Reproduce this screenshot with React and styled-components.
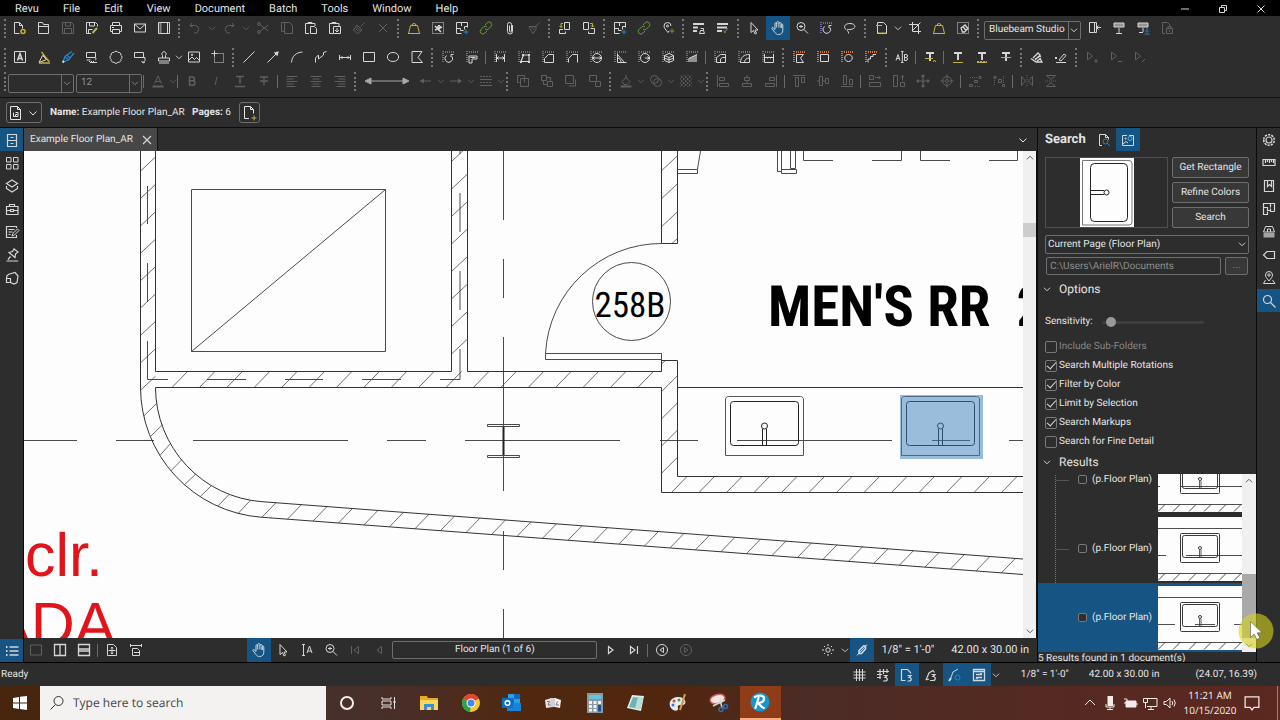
import React, { useState } from 'react';
import styled, { createGlobalStyle } from 'styled-components';

const YEL = '#c2b03c';
const GRN = '#6b9a35';
const BLU = '#2585c9';
const PUR = '#7561b0';
const ORG = '#e0702c';

const GlobalStyle = createGlobalStyle`
    * {
        box-sizing: border-box;
    }

    body {
        margin: 0;
        background: #2d2d2d;
        color: #e4e4e4;
        font-family: Roboto, "Liberation Sans", sans-serif;
        font-size: 10px;
        line-height: 14px;
        text-rendering: geometricPrecision;
        overflow: hidden;
    }

    button, input, select {
        font: inherit;
        color: inherit;
        margin: 0;
        text-rendering: inherit;
    }
`;

/* ---------- icons ---------- */

const ring = (cx, cy, r) =>
    `M${cx - r} ${cy}a${r} ${r} 0 1 0 ${2 * r} 0a${r} ${r} 0 1 0 ${-2 * r} 0`;

const HAND = 'M5 9.5L3.2 7.8c-.9-.8-1.7.2-1.2.9L5 12.6c.8 1.2 1.8 1.9 3.6 1.9 2.600 0 4.200-1.600 4.200-4.200V5c0-1.200-1.700-1.200-1.700 0V8M5 9.500V3.600c0-1.200 1.700-1.200 1.700 0V7.500M6.700 4V2.500c0-1.200 2.200-1.200 2.200 0V7.500M8.900 3.500c0-1.200 2.200-1.200 2.200 0V8';
const SMALL_CHAIN = 'M7 5l2.200-2.200a2.500 2.500 0 0 1 3.800 3.600L10.500 9a2.500 2.500 0 0 1-3.500 0M9 11l-2.200 2.200a2.500 2.500 0 0 1-3.800-3.600L5.500 7a2.500 2.500 0 0 1 3.500 0';
const PLAN = 'M13.500 7.500V2.500h-11v11h5M2.500 8.500h4M7.500 2.500v3.500M13.500 6.500h-3v3M6.500 8.500v2h3';
const dots = { dash: '1 1' };

const icons = {
    newDoc: [['M7.500 13.500h-5v-11h5l3 3v3M7.500 2.500v3h3'], [ring(11, 11.500, 2), { c: YEL, w: 1.600 }]],
    open: [['M2.500 13.500v-11h4l1 2h5v9zM2.500 6.500h10']],
    save: [['M2.500 2.500h9l2 2v9h-11zM5.500 2.500v3.500h5v-3.500M4.500 13.500v-5h7v5']],
    saveAs: [['M7 13.500h-4.500v-11h9l2 2v2M5.500 2.500v3.500h5v-3.500M4.500 13.500v-4h4'], ['M8.500 13l4.500-5', { c: YEL, w: 2 }]],
    print: [['M4.500 5.500v-3h7v3M4.500 11.500h-2v-6h11v6h-2M4.500 9.500h7v4h-7zM4 7.500h2']],
    mail: [['M2.500 4h11v8h-11zM2.500 4l5.500 5 5.500-5']],
    binder: [['M2.500 2.500h11v11h-11zM11.500 2.500v11'], ['M4.500 2.500v11', { dash: '1 1', w: 2 }]],
    undo: [['M5 3L3 5.500 5.500 7.500M3 5.500h5.500a3.800 3.800 0 0 1 0 7.500H7']],
    redo: [['M11 3l2 2.500L10.500 7.500M13 5.500H7.500a3.800 3.800 0 0 0 0 7.500H9']],
    cut: [['M5.300 5l8 6M5.300 11l8-6'], [ring(4, 4, 1.500) + ring(4, 12, 1.500)]],
    copy: [['M5.500 2.500h5l3 3v8h-8zM5.500 11.500h-3v-9h3']],
    paste: [['M6 13.500H2.500v-10H12V6M5 3.500v-1h4v1M7.500 6.500h4l2 2v5h-6z']],
    pasteIn: [['M6 13.500H2.500v-10H12V6M5 3.500v-1h4v1M6.500 6.500h7v7h-7zM10 8v4M8 10l2 2 2-2']],
    brush: [['M13.500 2.500l-4 4M6 5l5 5-1.500 1L5 6.500zM5 6.500L2.500 10l4 4 3-3M5 9l2 2']],
    cross: [['M4 4l8 8M12 4l-8 8']],
    weight: [['M4.500 5.500h7l2 8h-11zM6 5.500a2 2 0 1 1 4 0M2 13.500h12', { c: YEL }]],
    maskCut: [['M2.500 2.500h11v11h-11z', dots], ['M5 6l6 6M5 10l7-3M9 5v6', { w: 1.600 }], [ring(9, 7, 1.500)]],
    planAdd: [[PLAN], ['M12 9.500v5M9.500 12h5', { c: BLU }]],
    chain: [[SMALL_CHAIN, { c: GRN }]],
    clip: [['M10.500 5v6.500a2.500 2.500 0 0 1-5 0V4.500a2 2 0 0 1 4 0v6.500a1 1 0 0 1-2 0V5.500']],
    broom: [['M13.500 2.500l-4.500 5M3 6.500h7v3L7 13.500 3 7zM5.500 7l3 3']],
    pageBack: [['M7.500 2.500h5v7h-5zM6 9.500h-3.500v4h6v-2'], ['M6 3.500H4v4M2.500 6L4 7.500 5.500 6', { c: YEL }]],
    pageFwd: [['M2.500 2.500h5v7h-5zM7.500 11.500v2h6v-5h-4'], ['M9 3.500h2.500V7M10 5.500L11.500 7 13 5.500', { c: YEL }]],
    pinAdd: [['M8 12.500C5 9 4 7.500 4 6a3.500 3.500 0 0 1 7 0M8 12.500l1-1.500'], [ring(7.500, 6, 1)], ['M12 8.500v5M9.500 11h5', { c: GRN }]],
    listUser: [['M2 4h11M2 7.500h5M2 11h4', { w: 2 }], ['M8.500 13.500l1-3h3l1 3zM9.500 8.500h3v2']],
    listEdit: [['M2 4h11M2 7.500h10M2 11h5', { w: 2 }], ['M9 13l4-5M8.500 10.500l2 2.500', { c: GRN }]],
    arrow: [['M5 2.500v10l2.500-2 1.500 3.500 1.500-.7-1.500-3.300h3z']],
    hand: [[HAND]],
    zoom: [[ring(7, 6.500, 4)], ['M10 9.500l4 4M5 6.500h4M7 5v3']],
    lasso: [['M4 9.500C1.500 8 2 3.500 8 3.500s7 5.500 0 6c-2 0-3-.5-3 .5s2 1 1.500 3.500']],
    rotA: [['M6.500 6.500A3.800 3.800 0 1 0 12 7.500M13.500 5.500H11V8']],
    flag: [['M5 7h8v3H8v4H5zM6.500 8.500h5']],
    len: [['M4.500 5v8M12.500 5v8M5 9h7M6.500 7.500L5 9l1.500 1.500M10.500 7.500L12 9l-1.500 1.500']],
    poly: [['M5 12.500h8V6H7.500z', { w: 1.200 }], ['M4 12h2v2H4zM12 12h2v2h-2zM12 5h2v2h-2zM6 5h2v2H6z', { f: 1 }]],
    area: [['M4.500 13.500V9.500l4-4h5v8z']],
    poly2: [['M4.500 13.500V9.500l4-4h5v8']],
    diam: [[ring(9, 9, 4.500)], ['M5 9h8M6.500 7.500L5 9l1.500 1.500M11.500 7.500L13 9l-1.500 1.500']],
    angle: [['M5.500 4.500v9h9M5.500 5.500l7 8M5.500 9c2 0 3.500 2 3.500 4.500']],
    radius: [[ring(9, 9, 4.500)], ['M9 9h4.500M11.500 7.500L13 9l-1.500 1.500']],
    cube: [['M9 4.500l4.500 2v5L9 13.500l-4.500-2v-5zM4.500 6.500L9 8.500l4.500-2M9 8.500v5M4.500 9L9 11l4.500-2']],
    slope: [['M4 13V9.500l9-4V13z', { f: 1, o: 0.6 }], ['M5 9.500l8-4']],
    cutout: [['M4.500 13.500V8.500l4-3h5v8zM8.500 13v-3l2-1.500h3']],
    arcCut: [['M4.500 13.500C4.500 8 8 5.500 13.500 5.500v8zM8.500 13.500c0-3 2-4.500 5-4.500']],
    dyn: [['M4.500 5v8.500h9V5M5 8.500h8M6 8l1.500 1L9 8l1.500 1L12 8']],
    rotPoly: [['M5.500 5.500h7L9.500 9l3 4.500h-7z']],
    rotRect: [['M5.500 5.500h8v7h-8z']],
    rotEll: [['M9.500 5.500c5 0 5 7 0 7s-5-7 0-7z']],
    rotLine: [['M5 13.500V10h2.500V7.500H10V5.500h3']],
    pageMark: [['M4.500 13.500v-11h6l3 3v8z'], ['M3 5.500h6M5 13h8', { c: YEL }]],
    crop: [['M5.500 2v9.500H14M2 4.500h9.500V14M13.500 2.500l-8 8']],
    maskErase: [['M2.500 2.500h11v11h-11z', dots], ['M6 8l4-3 3 3.500-3.500 3.500-2 0zM8 6.500l3 4', { w: 1.300 }]],
    textBox: [['M2.500 2.500h11v11h-11z'], ['M5.500 11.500L8 4.500l2.500 7M6.500 9.500h3', { w: 1.500 }]],
    highlight: [['M3 13.500l3.500-7 4 4zM7 6l4 4.500 2.500 1.500'], ['M5.500 3L13 12.500M3 14h11', { c: YEL, w: 1.300 }]],
    pen: [['M3 13l2-5.500 7-5M3 13l5.500-2L14 4M5 7.500L8.500 11M7 6l3 3', { c: BLU, w: 1.300 }], ['M2.500 13.500l1.500-1.500', { w: 2 }]],
    callout: [['M2.500 3.500h9v5h-9zM6 8.500h4c2 0 3 2 1 2.500M2.500 11h4M6 13.500h7'], ['M5 12.500h6', dots]],
    cloud: [['M6 3.500a2.200 2.200 0 0 1 4 0 2.200 2.200 0 0 1 2.800 2.800 2.200 2.200 0 0 1 0 4 2.200 2.200 0 0 1-2.800 2.800 2.200 2.200 0 0 1-4 0 2.200 2.200 0 0 1-2.800-2.800 2.200 2.200 0 0 1 0-4A2.200 2.200 0 0 1 6 3.500z']],
    note: [['M2.500 3.500h9v5h-9zM9 8.500h4v3l-2 2M9.500 12l1.500 2 2-1']],
    stamp: [['M6.500 9V6.500a2.200 2.200 0 1 1 3 0V9M2.500 9h11v3h-11zM3 14h10']],
    image: [['M2.500 3h11v10h-11zM3 11l3-3 2.500 2.500 2-2 3 3'], [ring(6, 5.800, 0.8)]],
    snapshot: [['M4.500 4.500h9v9h-9z', dots], ['M4.500 1.500v6M1.500 4.500h6', { c: '#cfcfcf' }]],
    line: [['M2.500 13.500l11-11']],
    arrowLine: [['M2.500 13.500l9-9'], ['M13.800 2.200l-1.300 5-3.700-3.700z', { f: 1 }]],
    arc: [['M2.500 13.500C3 7 7 3.500 13.500 3']],
    polyline: [['M2.500 13.500V9l3-3v4l5-4V3.500l3-1']],
    dim: [['M2.500 6v5M13.500 6v5M3 8.500h10'], ['M3 8.500l2.500-1.500v3zM13 8.500l-2.500-1.500v3z', { f: 1 }]],
    rect: [['M2.500 3.500h11v9h-11z']],
    ellipse: [['M8 3.500c7.500 0 7.500 9 0 9s-7.500-9 0-9z']],
    polygon: [['M3 2.500h10l-4 6 4.500 5H3z']],
    ab: [['M2 11.500l2-6 2 6M3 9.500h2M10.500 5.500v6h1.500a1.500 1.500 0 0 0 0-3h-1.500h1.500a1.500 1.500 0 0 0 0-3zM8.300 3v10M7 2.500h2.500M7 13.500h2.500']],
    tMark: [['M4 4h8M8 4v8', { w: 2 }], ['M3 9.500h8M11 13l1.500-2 1.500 2', { c: YEL }]],
    tUnder: [['M4 4h8M8 4v7', { w: 2 }], ['M3 13.500h10', { c: YEL }]],
    tSquig: [['M4 4h8M8 4v7', { w: 2 }], ['M3 12.500h10', { c: YEL, dash: '2 1' }], ['M3 13.500h10', { c: YEL }]],
    tStrike: [['M4 4h8M8 4v8', { w: 2 }], ['M3 8.500h10', { c: YEL }]],
    sign: [['M2 9.500l5 3.500h6l-2-3.500M4 9l5-5 2 2-5 5M6 10l6-3M8 12l4-3', { w: 1.300 }]],
    initials: [['M2 8l2 2M4 8l-2 2M3 13.500h10M6 11l5-6 2 1.500L8 12z']],
    sel1: [['M3.500 3v8l5-4z'], ['M10 12h4M12 10v4']],
    sel2: [['M3.500 3v8l5-4z'], ['M10 12.500h4']],
    sel3: [['M3.500 3v8l5-4z'], ['M10 13l3-3']],
    fontColor: [['M4.500 10.500L8 3l3.500 7.500M5.500 8.500h5'], ['M2.500 13.500h11', { w: 2 }]],
    bold: [['M5.500 4v8h3.200a2 2 0 0 0 0-4.200H5.500h3a1.900 1.900 0 0 0 0-3.800z', { w: 1.500 }]],
    italic: [['M9 4L7 12']],
    under: [['M4 3.500h8M8 3.500v7M3 13.500h10', { w: 1.400 }]],
    strike: [['M4 4h8M8 4v8.500M4 8h8', { w: 1.300 }]],
    alignL: [['M2.500 3.500h11M2.500 6h7M2.500 8.500h11M2.500 11h7M2.500 13.500h9']],
    alignC: [['M2.500 3.500h11M4.500 6h7M2.500 8.500h11M4.500 11h7M3.500 13.500h9']],
    alignR: [['M2.500 3.500h11M6.500 6h7M2.500 8.500h11M6.500 11h7M4.500 13.500h9']],
    startL: [['M2 8h11'], ['M2 8l4-2.500v5z', { f: 1 }]],
    endR: [['M2 8h11'], ['M14 8l-4-2.500v5z', { f: 1 }]],
    lines: [['M2 3.500h12M2 9.500h12', { dash: '2 1' }], ['M2 6.500h12M2 12.500h12']],
    order1: [['M2.500 2.500h7v7M2.500 2.500v7h2M5.500 5.500h8v8h-8z']],
    order2: [['M2.500 2.500h5v5h-5zM8.500 8.500h5v5h-5zM8 4.500h3.500v4M4.500 8v3.500h4']],
    order3: [['M2.500 2.500h8v8h-8zM12.500 6.500v6.500h-6.500']],
    order4: [['M2.500 2.500h7v6h-7zM9.500 8.500h4v5h-5v-5']],
    fill: [['M4 8.500l4-4 4 4-3 3H6zM8 2v4'], ['M2.500 13.500h11', { w: 2 }]],
    opac: [[ring(6.500, 6.500, 4) + ring(9.500, 9.500, 4)]],
    hatch: [['M2.500 5.500l3-3M2.500 9.500l7-7M2.500 13.500l11-11M6.500 13.500l7-7M10.500 13.500l3-3M2.500 10.500l3 3M2.500 6.500l7 7M2.500 2.500l11 11M6.500 2.500l7 7M10.500 2.500l3 3', { dash: '2 1' }]],
    alL: [['M2.500 2v12M4.500 4.500h5v3h-5zM4.500 10.500h9v3h-9z']],
    alC: [['M8 2v2M8 7.500v3M5.500 4.500h5v3h-5zM3.500 10.500h9v3h-9z']],
    alR: [['M13.500 2v12M6.500 4.500h5v3h-5zM2.500 10.500h9v3h-9z']],
    alT: [['M2 2.500h12M4.500 4.500h3v9h-3zM10.500 4.500h3v5h-3z']],
    alM: [['M2 8h2M7.500 8h3M4.500 3.500h3v9h-3zM10.500 5.500h3v5h-3z']],
    alB: [['M2 13.500h12M4.500 2.500h3v9h-3zM10.500 6.500h3v5h-3z']],
    sameW: [['M2.500 2.500h4v4h-4zM2.500 9.500h11v4h-11zM8 4.500h5.500M11.500 3l2 1.500-2 1.500']],
    sameH: [['M2.500 2.500h4v11h-4zM9.500 9.500h4v4h-4zM11.500 2.500v5M10 4.500l1.500-2 1.500 2']],
    center: [['M8 2v12M2 8h12M6.500 3.500L8 2l1.500 1.500M6.500 12.500L8 14l1.500-1.500M3.500 6.500L2 8l1.500 1.500M12.500 6.500L14 8l-1.500 1.500', { w: 1.200 }]],
    target: [[ring(8, 8, 4.500) + ring(8, 8, 1.500)], ['M8 1.500v4M8 10.500v4M1.500 8h4M10.500 8h4']],
    distH: [['M2.500 11.500h3v2h-3zM7.500 7.500h3v2h-3zM12 3.500h2v2h-2z'], ['M3 4.500h8M8 13.500h6', dots]],
    distV: [['M3 3.500h2v2H3zM7.500 6.500h3v3h-3zM11.500 11.500h2v2h-2z'], ['M3.500 7v6M12.500 3v7', dots]],
    flipH: [['M2.500 3.500v9l4-4.500zM13.500 3.500v9l-4-4.500z'], ['M8 2v12', dots]],
    flipV: [['M3.500 2.500h9L8 6.500zM3.500 13.500h9L8 9.500z'], ['M2 8h12', dots]],
    exitRoom: [['M2.500 2.500h5v10h-5zM7.500 2.500h2v10h-2M14 7.500H9.500M11.500 5.500l-2 2 2 2']],
    project: [['M3 3h10v4H3z', { f: 1, o: 0.6 }], ['M8 8v5M5 13.500h6M3 3h10v4H3z']],
    projectIn: [['M3 3h10v4H3z', { f: 1, o: 0.6 }], ['M8 8v4M4 12.500h4M3 3h10v4H3z'], ['M12 8v4M10 10.500l2 2 2-2M9.500 14h5', { c: BLU }]],
    docLock: [['M6 13.500H3.500v-11h5l3 3M7.500 8.500h6v5h-6zM9 8V6.500h3V8M10.500 10v2']],
    thumbs: [['M2.500 2.500h4.500v4.500H2.500zM9.500 2.500H14v4.500H9.500zM2.500 9.500h4.500V14H2.500zM9.500 9.500H14V14H9.500z']],
    cabinet: [['M3.500 2.500h9v12h-9zM3.500 8.500h9M6.500 5.500h3M6.500 11.500h3', { w: 1.200 }]],
    layers: [['M8 2L2.500 5.500 8 9l5.500-3.500zM2.500 8v2.500L8 14l5.500-3.500V8', { w: 1.200 }]],
    toolbox: [['M2.500 5.500h11.500v8H2.500zM2.500 9.500h4M9.500 9.500H14M6.500 8.500h3v2h-3zM5.500 5.500v-2h5v2', { w: 1.200 }]],
    formEdit: [['M12.500 4V2.500h-10v11h10V11M4.500 5.500h6M4.500 8h4M4.500 10.500h2', { w: 1.200 }], ['M8 12l.8-2.500L13.500 5l1.500 1.500-4.500 4.500z']],
    sigs: [['M2.500 14h11.500M4 12.500l2.500-3M5 5.500l6 5 .5-3.500 2.500-2-4-3-1.500 2.500z', { w: 1.200 }]],
    tag3d: [['M5.500 4L11 2.500l3 3.500-1 6.500-3 1.500-3.500-1.500M2.500 8.500h4v4h-4zM2.500 8.500l.5-3 2.500-1.500', { w: 1.200 }]],
    gear: [[ring(8, 8, 3), { w: 1.200 }], [ring(8, 8, 5.300), { w: 1.600, dash: '2.200 1.100' }]],
    ruler: [['M2 4.500h12v6H2zM4.500 5v3M6.500 5v2M8.500 5v3M10.500 5v2M12.500 5v3', { w: 1.200 }]],
    bookmark: [['M3.500 2.500h9v11h-9zM6.500 2.500v6l2-2 2 2v-6', { w: 1.200 }]],
    spaces: [['M13.500 10.500V2.500h-11v11h4v-3M2.500 6.500h4v3h3M9.500 2.500v4M13.500 10.500h-4v-3', { w: 1.200 }]],
    sets: [['M4.500 2.500h7l2 5.500h-11zM6.500 8V5h3v3'], ['M2.500 9h11v4.500h-11z', { f: 1, o: 0.7 }]],
    label: [['M6 4.500h7.500v7H6L2.500 8z', { w: 1.200 }]],
    mapPin: [['M8 11C5.500 8 4.500 6.500 4.500 5a3.500 3.500 0 0 1 7 0C11.500 6.500 10.500 8 8 11zM4.500 10L2.500 13.500H14L11.500 10'], [ring(8, 5, 1.200)]],
    search: [[ring(6.500, 6.500, 4), { w: 1.200 }], ['M9.500 9.500l5 5', { w: 1.200 }]],
    docSearch: [['M6 13.500H3.500v-11h6l3 3v2M9.500 2.500v3h3'], [ring(9.500, 9.500, 2.500), { c: BLU }], ['M11.500 11.500l2.500 2.500', { c: BLU }]],
    visSearch: [['M2.500 13.500v-10H7M9 3.500h4.500v10h-11M3 12l3-2.500 2 1.500'], [ring(10, 6.500, 2), { c: '#5fb0e8' }], [ring(5.500, 6.500, 0.6)]],
    bullets: [['M5.500 4h9M5.500 8h9M5.500 12h9', { w: 1.500 }], ['M2 4h1.500M2 8h1.500M2 12h1.500', { w: 2 }]],
    single: [['M2.500 3h11v10h-11z']],
    splitV: [['M2.500 2.500h11v11h-11zM8 3v10', { w: 1.300 }]],
    splitH: [['M2.500 2.500h11v11h-11zM2.500 7h11M2.500 9h11', { w: 1.300 }]],
    fitPage: [['M3.500 2.500h6l3 3v8h-9zM8 5v7M4.500 8.500h7M7 6.500l1-1.500 1 1.500M7 10.500l1 1.500 1-1.500']],
    fitWidth: [['M2.500 2v3M13.500 2v3M3 3.500h10M4.500 13.500v-7h5l2 2v5zM6 10.500h6']],
    selText: [['M4.500 3v10M3 2.500h3M3 13.500h3M8 11l2.500-7 2.500 7M9 9h3']],
    first: [['M4.500 4v8M11.500 4.500v7L7 8z']],
    prev: [['M10.500 4.500v7L6 8z']],
    next: [['M6.500 4.500v7L11 8z', { w: 1.200 }]],
    last: [['M11.500 4v8M4.500 4.500v7L9 8z', { w: 1.200 }]],
    backView: [[ring(8, 8, 5.500)], ['M9.500 5.500v5L6 8z']],
    fwdView: [[ring(8, 8, 5.500)], ['M6.500 5.500v5L10 8z']],
    sun: [[ring(8, 8, 2.200)], ['M8 2v2M8 12v2M2 8h2M12 8h2M4 4l1 1M11 11l1 1M12 4l-1 1M4 12l1-1']],
    penSlash: [['M3 13.500l10-11'], ['M5 11.500V8.500l4.500-4.500h2v3L7.500 11.500z', { w: 1.600 }]],
    grid: [['M5.500 2v12M8.500 2v12M11.500 2v12M2.500 5h12M2.500 8h12M2.500 11h12']],
    snapGrid: [['M5 2v10M8.500 2v5M12 2v4M2 4.500h12M2 7.500h5M2 10.500h4M8.500 8.500h3.500l-2 2c3 0 3 3.500 0 3.500H8', { w: 1.200 }]],
    snapDoc: [['M6.500 13.500h-4v-11h6l3 3v1M8.500 8.500H12l-2 2c3 0 3 3.500 0 3.500H8.500', { w: 1.200 }]],
    snapMark: [['M3 13l3-7 4-2.500 1.500 2M3 13l3-1M8.500 7.500H12l-2 2c3 0 3 4 0 4H7', { w: 1.200 }]],
    reuse: [['M3 13l3-8 5-3'], ['M2 14l2-3', { w: 2 }], [ring(10.500, 10.500, 2.500), { c: BLU }]],
    syncView: [['M2.500 2.500h11v11h-11zM2.500 4.500h11M5 7.500h6M9.500 6l1.500 1.500M11 10.500H5M6.500 12L5 10.500', { w: 1.300 }]],
    pageAdd: [['M8 13.500H3.500v-12h6l3 3v4M9.500 1.500v3h3'], ['M13 10.500v5M10.500 13h5', { c: YEL }]],
    pageKey: [['M2.500 14.500v-13h7l3 3v10zM9.500 1.500v3h3M5.500 7.500v4h2M7.500 7.500h2.500v4h-2.500v-2h2']],
    down: [['M4.500 6.500L8 10l3.500-3.500']],
    up: [['M4.500 9.500L8 6l3.500 3.500']],
    close: [['M4 4l8 8M12 4l-8 8', { w: 1.200 }]],
};

const Svg = styled.svg`
    display: block;
    flex: none;
    width: ${(p) => p.$size || 16}px;
    height: ${(p) => p.$size || 16}px;
    fill: none;
    stroke: currentColor;
`;

const Icon = ({ name, size, back }) => (
    <Svg $size={size} viewBox="0 0 16 16" aria-hidden="true">
        {back && <path d="M3 2v12M5 3h10" stroke={back} strokeWidth="2" strokeDasharray="1 1" />}
        {icons[name].map(([d, o = {}], i) => (
            <path
                key={i}
                d={d}
                stroke={o.f ? 'none' : o.c}
                fill={o.f ? 'currentColor' : undefined}
                opacity={o.o}
                strokeWidth={o.w}
                strokeDasharray={o.dash}
            />
        ))}
    </Svg>
);

/* ---------- shared bits ---------- */

const IconButton = styled.button`
    display: flex;
    align-items: center;
    justify-content: center;
    flex: none;
    width: ${(p) => p.$w || 24}px;
    height: ${(p) => p.$h || 24}px;
    padding: 0;
    border: 0;
    background: ${(p) => (p.$on ? '#155483' : 'transparent')};
    color: ${(p) => (p.$dim ? '#606060' : '#d6d6d6')};
`;

const Grip = styled.span`
    flex: none;
    width: 7px;
    height: 19px;
    border-right: 2px dotted #777;
    margin-right: ${(p) => (p.$lead ? 2 : 3)}px;
    margin-left: ${(p) => (p.$lead ? -1 : -3)}px;
`;

const Sep = styled.span`
    flex: none;
    width: 1px;
    height: 13px;
    margin: 0 2px 0 1px;
    background: #6a6a6a;
`;

const ToolRow = styled.div`
    display: flex;
    align-items: center;
    height: 24px;
    margin-bottom: ${(p) => p.$gap || 0}px;
`;

const Combo = styled.div`
    position: relative;
    display: flex;
    flex: none;
    width: ${(p) => p.$w}px;
    height: 19px;
    margin: ${(p) => p.$m || '4px 2px 0 0'};
    color: ${(p) => (p.$dim ? '#8e8e8e' : '#e4e4e4')};

    select {
        appearance: none;
        width: 100%;
        padding: 0 14px 0 ${(p) => (p.$plain ? 2 : 4)}px;
        border: 1px solid #6e6e6e;
        border-radius: 2px;
        background: #2d2d2d;
        outline: none;
    }

    svg {
        position: absolute;
        right: 0;
        top: 2px;
        pointer-events: none;
    }

    &::after {
        content: '';
        position: absolute;
        right: 12px;
        top: 1px;
        bottom: 1px;
        width: ${(p) => (p.$plain ? 0 : 1)}px;
        background: #6e6e6e;
    }
`;

/* an entry is a name, or [name, options]; menu is the width of the drop-down arrow */
const row1 = [
    ['newDoc', 'open', ['save', { dim: 1 }], 'saveAs', 'print', 'mail', 'binder'],
    [['undo', { dim: 1, menu: 10 }], ['redo', { dim: 1, menu: 10 }], ['cut', { dim: 1 }], ['copy', { dim: 1 }], 'paste', 'pasteIn', ['brush', { dim: 1 }], ['cross', { dim: 1 }]],
    ['weight', 'maskCut', 'planAdd', 'chain', 'clip', ['broom', { dim: 1 }]],
    ['pageBack', 'pageFwd'],
    ['planAdd', 'chain', 'pinAdd'],
    ['listUser', 'listEdit'],
    ['arrow', ['hand', { on: 1 }], 'zoom', ['rotA', { back: PUR }], 'lasso'],
    [['pageMark', { menu: 10 }], 'crop', 'weight', 'maskErase'],
];

const row2 = [
    ['textBox', 'highlight', 'pen', 'callout', 'cloud', 'note', ['stamp', { menu: 6 }], 'image', 'snapshot'],
    ['line', 'arrowLine', 'arc', 'polyline', 'dim', 'rect', 'ellipse', 'polygon'],
    [
        ...['rotA', 'flag', '|', 'len', 'poly', 'area', 'poly2', 'diam', 'angle', 'radius', 'cube', 'slope', '|', 'cutout', 'arcCut', 'dyn']
            .map((n) => (n === '|' ? n : [n, { back: PUR }])),
    ],
    ['rotPoly', 'rotRect', 'rotEll', 'rotLine'].map((n) => [n, { back: ORG }]),
    ['ab', '|', 'tMark', '|', 'tUnder', 'tSquig', 'tStrike'],
    ['sign', 'initials'],
    [['sel1', { dim: 1 }], ['sel2', { dim: 1 }], ['sel3', { dim: 1 }]],
];

const dimmed = (list) => list.map((n) => (n === '|' ? n : [n, { dim: 1 }]));
const dimMenu = (list) => list.map((n) => [n, { dim: 1, menu: 6 }]);

const textTools = ['|', ['fontColor', { dim: 1, menu: 6 }], ...dimmed(['|', 'bold', 'italic', 'under', 'strike', '|', 'alignL', 'alignC', 'alignR'])];

const row3 = [
    dimmed(['order1', 'order2', 'order3', 'order4']),
    dimMenu(['fill', 'opac', 'hatch']),
    dimmed(['alL', 'alC', 'alR', '|', 'alT', 'alM', 'alB', '|', 'sameW', 'sameH', 'center', 'target', '|', 'distH', 'distV', '|', 'flipH', 'flipV']),
];

const Tools = ({ items, h }) =>
    items.map((item, i) => {
        if (item === '|') return <Sep key={i} />;
        const [name, o = {}] = Array.isArray(item) ? item : [item];
        return (
            <React.Fragment key={i}>
                <IconButton $on={o.on} $dim={o.dim} $h={h} aria-label={name}>
                    <Icon name={name} back={o.back} />
                </IconButton>
                {o.menu && (
                    <IconButton $w={o.menu} $h={h} $dim={o.dim} aria-label={`${name} menu`}>
                        <Icon name="down" size={14} />
                    </IconButton>
                )}
            </React.Fragment>
        );
    });

const Groups = ({ groups, lead }) =>
    groups.map((g, i) => (
        <React.Fragment key={i}>
            <Grip $lead={lead && i === 0} />
            <Tools items={g} />
        </React.Fragment>
    ));

/* ---------- frame ---------- */

const Page = styled.div`
    display: flex;
    flex-direction: column;
    height: 100vh;
`;

const MenuBar = styled.nav`
    display: flex;
    align-items: center;
    gap: 24px;
    height: 16px;
    padding: 1px 0 0 15px;
    background: #000;

    button {
        padding: 0;
        border: 0;
        background: none;
        font-size: 11px;
    }
`;

const WindowButtons = styled.div`
    display: flex;
    gap: 22px;
    margin-left: auto;
    padding-right: 11px;
`;

const Toolbars = styled.header`
    padding-bottom: 4px;
    border-bottom: 1px solid #111;
`;

const DoubleArrow = styled.svg`
    flex: none;
    width: 55px;
    height: 12px;
    fill: #a8a8a8;
    stroke: #a8a8a8;
`;

const DocBar = styled.div`
    display: flex;
    align-items: center;
    height: 30px;
    padding-left: 6px;
    border-bottom: 1px solid #0c0c0c;
`;

const DocButton = styled.button`
    display: flex;
    align-items: center;
    justify-content: space-around;
    width: ${(p) => p.$w}px;
    height: 21px;
    padding: 0;
    border: 1px solid #6e6e6e;
    border-radius: 3px;
    background: transparent;
`;

const DocInfo = styled.p`
    margin: 0 8px;
`;

const Main = styled.main`
    display: flex;
    flex: 1;
    min-height: 0;
    border-bottom: 1px solid #000;
`;

const Rail = styled.div`
    display: flex;
    flex-direction: column;
    flex: none;
    width: ${(p) => (p.$left ? 24 : 23)}px;
    border-right: ${(p) => (p.$left ? '1px solid #0c0c0c' : '0')};

    button {
        width: 100%;
    }

    button:nth-child(8):last-child {
        margin-top: ${(p) => (p.$left ? 'auto' : '0')};
    }
`;

const Center = styled.section`
    display: flex;
    flex-direction: column;
    flex: 1;
    min-width: 0;
`;

const TabStrip = styled.div`
    display: flex;
    align-items: center;
    justify-content: space-between;
    height: 23px;
    padding-right: 6px;
`;

const DocTab = styled.div`
    display: flex;
    align-items: center;
    gap: 6px;
    height: 23px;
    padding: 0 2px 0 6px;
    background: #474747;
    border-right: 1px solid #151515;
`;

const CanvasArea = styled.div`
    display: flex;
    flex: 1;
    min-height: 0;
    background: #fdfdfd;
`;

const PlanSvg = styled.svg`
    flex: 1;
    min-width: 0;
    height: 100%;
    fill: none;
    stroke: #4a4a4a;
`;

const PlanText = styled.text`
    stroke: none;
    fill: ${(p) => p.$c || '#000'};
    font-family: ${(p) => (p.$wide ? '' : '"Liberation Sans Narrow", "Roboto Condensed", Roboto, ')}"Liberation Sans", sans-serif;
    font-size: ${(p) => p.$s}px;
    font-weight: ${(p) => (p.$b ? 700 : 400)};
`;

const ScrollBar = styled.div`
    display: flex;
    flex-direction: column;
    flex: none;
    width: 14px;
    background: #f0f0f0;
    color: #444;
    border-right: ${(p) => (p.$edge ? '1px solid #111' : '0')};
`;

const Track = styled.div`
    flex: 1;
    display: grid;
    grid-template-rows: ${(p) => p.$rows};
`;

const Thumb = styled.div`
    grid-row: 2;
    background: ${(p) => p.$c};
`;

const BottomBar = styled.div`
    display: flex;
    justify-content: space-between;
    align-items: center;
    height: 24px;
`;

const BarGroup = styled.div`
    display: flex;
    align-items: center;
    padding-right: ${(p) => p.$pad || 0}px;
`;

const PageBox = styled.button`
    width: 205px;
    height: 18px;
    margin: 0 1px;
    padding: 0;
    border: 1px solid #6e6e6e;
    border-radius: 2px;
    background: transparent;
`;

const Info = styled.span`
    margin-left: ${(p) => p.$ml}px;
    white-space: nowrap;
    font-size: ${(p) => p.$s || 10}px;
`;

/* ---------- floor plan ---------- */

const series = (start, step, count, fn) =>
    Array.from({ length: count }, (_, i) => fn(start + step * i)).join('');

const hatches = [
    series(171.5, 27.4, 9, (y) => `M140 ${y}l15.500-14.500`),
    series(161.5, 27.5, 8, (y) => `M451.500 ${y}l16-15`),
    series(172, 27.4, 18, (x) => `M${x} 387.500l15.500-16`),
    series(170.7, 28, 3, (y) => `M661.500 ${y}l16-15`),
    series(391.7, 27.2, 4, (y) => `M661.500 ${y}l16-16`),
    series(671.5, 27.5, 13, (x) => `M${x} 492.500l15.500-16`),
    series(262, 25.5, 30, (x) => `M${x} ${517.2 + 0.0752 * (x - 262)}l14-14.500`),
    'M672 243.500l5.500-5M661.500 364l4.500-4',
    'M144 415.700L156.800 403.300M151 436L162.500 424.700M160 455.300L170.700 443.300M171 470.700L181.800 459.700',
    'M184.600 484.700L195.700 474M200.400 496.300L211.400 485.700M217.900 506L229.300 494.300M237.900 513.700L250.400 500.300',
].join('');

const dashes = [
    'M147.500 186v38M147.500 263v39M147.500 341v38.500H168M207 379.500h39M285 379.500h38M362 379.500h39M440 379.500h20V349M460 271v39M460 193v39M460 151v3',
    'M503.500 151v69M503.500 259v39M503.500 337v154M503.500 531v39M503.500 609v29',
    'M24 440.500h53M116 440.500h38M193 440.500h155M387 440.500h39M465 440.500h155M660 440.500h38M737 440.500h155M932 440.500h38M1009 440.500h14',
].join('');

const walls = [
    'M140.500 151V387A130.500 130.500 0 0 0 261 517.200L1023 574.500',
    'M155.500 387.500A115 115 0 0 0 262 501.700L1023 559',
    'M155.500 151V371.500H451.500V151M467.500 151V371.500H661.500V353.500M155.500 387.500H661.500V492.500H1023',
    'M661.500 151V243.500H677.500V151M661.500 360.500H677.500V476.500H1023M677.500 387.500H1023',
].join('');

const fixtures = [
    'M191.500 189.500H385.500V351.500H191.500zM191.500 351.500L385.500 189.500',
    'M545.500 353.500H661.500V359.500H545.500zM545.500 353.500A116 116 0 0 1 661.500 243.500',
    'M678 169.500H697.500V173.500H678M697.500 169L700.500 151M777.500 151V171.500H781.500V151M781.500 169.500H796.500V173.500H781.500zM790.500 151V168.500H795.500V151',
    'M803.500 151V160.500H833M872 160.500H901.500V151M920.500 151V160.500H950M989 160.500H1017.500V151',
    'M487.500 424.500h32v2h-32zM487.500 455.500h32v2h-32z',
].join('');

const SINK = 'M725.500 455.500V400a3 3 0 0 1 3-3.500h72a3 3 0 0 1 3 3.500V455.500z';

const Sink = ({ dx }) => (
    <g transform={`translate(${dx} 0)`} stroke="#222">
        <path d={SINK} stroke="#555" />
        <rect x="730.500" y="401.500" width="68" height="44" rx="3" />
        <circle cx="764.500" cy="426" r="3" />
        <path d="M762.500 429v17M766.500 429v17" />
    </g>
);

const FloorPlan = () => (
    <PlanSvg viewBox="24 151 999 487" preserveAspectRatio="xMinYMin slice" role="img" aria-label="Floor plan">
        <path d={hatches} strokeWidth="0.8" />
        <path d={dashes} />
        <path d={walls} stroke="#333" />
        <path d={fixtures} />
        <path d="M503.500 427v28" strokeWidth="2" stroke="#222" />
        <circle cx="631.500" cy="301.500" r="39" />
        <Sink dx={0} />
        <Sink dx={176} />
        <rect x="900" y="395" width="83" height="64" fill="#3a7dbc" fillOpacity="0.500" stroke="none" />
        <PlanText x="630" y="317" $s={35} textAnchor="middle">258B</PlanText>
        <PlanText x="768" y="326" $s={57} $b xmlSpace="preserve">{"MEN'S RR\u00a0 258"}</PlanText>
        <PlanText x="25" y="576" $s={61} $wide $c="#e0151b">clr.</PlanText>
        <PlanText x="-10" y="645" $s={61} $wide $c="#e0151b">ADA</PlanText>
    </PlanSvg>
);

/* ---------- search panel ---------- */

const Panel = styled.aside`
    position: relative;
    display: flex;
    flex-direction: column;
    flex: none;
    width: 220px;
    border-left: 1px solid #0c0c0c;
    border-right: 1px solid #0c0c0c;
`;

const PanelHead = styled.div`
    display: flex;
    align-items: center;
    height: 23px;
    padding-left: 7px;

    h2 {
        width: 47px;
        margin: 0;
        font-size: 13px;
        line-height: 16px;
    }
`;

const Source = styled.div`
    display: grid;
    grid-template-columns: 1fr 77px;
    gap: 4px;
    padding: 6px 7px 7px;
`;

const Preview = styled.div`
    grid-row: span 3;
    display: flex;
    justify-content: center;
    border: 1px solid #505050;
`;

const PanelButton = styled.button`
    height: ${(p) => p.$h || 21}px;
    padding: 0;
    border: 1px solid #6e6e6e;
    border-radius: 2px;
    background: #383838;
    color: ${(p) => (p.$dim ? '#8e8e8e' : '#e4e4e4')};
`;

const PathRow = styled.div`
    display: grid;
    grid-template-columns: 1fr 23px;
    gap: 4px;
    padding: 3px 8px 0;

    input {
        min-width: 0;
        height: 18px;
        padding: 0 3px;
        border: 1px solid #6e6e6e;
        border-radius: 2px;
        background: #2d2d2d;
        color: #8e8e8e;
    }
`;

const SectionTitle = styled.h3`
    display: flex;
    align-items: center;
    gap: 5px;
    height: 16px;
    margin: ${(p) => p.$m};
    padding-left: 2px;
    font-size: 12px;
    font-weight: 400;
`;

const SliderRow = styled.label`
    display: flex;
    align-items: center;
    gap: 9px;
    height: 16px;
    margin-bottom: 7px;
    padding-left: 7px;
`;

const Slider = styled.input`
    appearance: none;
    width: 102px;
    height: 3px;
    border-radius: 2px;
    background: #3d3d3d;

    &::-webkit-slider-thumb {
        appearance: none;
        width: 10px;
        height: 10px;
        border-radius: 50%;
        background: #999;
    }
`;

const CheckRow = styled.label`
    display: flex;
    align-items: center;
    gap: 2px;
    height: ${(p) => p.$h || 19}px;
    padding-left: 7px;
    color: ${(p) => (p.$dim ? '#868686' : '#e4e4e4')};
`;

const Check = styled.input`
    appearance: none;
    position: relative;
    flex: none;
    width: ${(p) => p.$s || 12}px;
    height: ${(p) => p.$s || 12}px;
    border: 1px solid #7a7a7a;
    border-radius: 2px;
    background: #2d2d2d;

    &:checked::after {
        content: '';
        position: absolute;
        left: 1px;
        top: 1px;
        width: 8px;
        height: 4px;
        border-left: 1px solid #ddd;
        border-bottom: 1px solid #ddd;
        transform: rotate(-48deg);
    }
`;

const ResultArea = styled.div`
    display: flex;
    flex: 1;
    min-height: 0;
    overflow: hidden;
`;

const ResultList = styled.div`
    display: flex;
    flex: 1;
    flex-direction: column;
    justify-content: flex-end;
    min-width: 0;
`;

const ResultRow = styled.label`
    display: flex;
    align-items: center;
    flex: none;
    height: 69px;
    padding-left: 17px;
    background: ${(p) => (p.$on ? '#155483' : 'transparent')};
`;

const Branch = styled.span`
    align-self: stretch;
    width: 23px;
    border-left: 1px dotted ${(p) => (p.$on ? 'transparent' : '#777')};

    &::after {
        content: '';
        display: block;
        width: 13px;
        height: 35px;
        border-bottom: 1px solid ${(p) => (p.$on ? 'transparent' : '#555')};
    }
`;

const ResultName = styled.span`
    flex: 1;
    padding-left: 5px;
    white-space: nowrap;
`;

const ResultThumb = styled.svg`
    flex: none;
    width: 84px;
    height: 64px;
    background: #fdfdfd;
    fill: none;
    stroke: #3a3a3a;
`;

const Found = styled.p`
    height: 10px;
    margin: 0;
    overflow: hidden;
    line-height: 13px;
`;

const Pointer = styled.svg`
    position: absolute;
    right: -18px;
    bottom: 13px;
    z-index: 2;
    width: 36px;
    height: 36px;
    pointer-events: none;
`;

const StatusBar = styled.footer`
    display: flex;
    align-items: center;
    height: 23px;
    padding: 0 23px 0 1px;

    & > :nth-child(2) {
        margin-left: auto;
    }
`;

const options = [
    ['Include Sub-Folders', false, true],
    ['Search Multiple Rotations', true],
    ['Filter by Color', true],
    ['Limit by Selection', true],
    ['Search Markups', true],
    ['Search for Fine Detail', false],
];

const results = ['M23 38.500h61M0 38.500h2', 'M0 38.500h8M28 38.500h56', 'M0 38.500h17M37 38.500h20M76 38.500h8'];

const SearchPanel = () => {
    const [checked, setChecked] = useState(options.map((o) => o[1]));
    const toggle = (i) => setChecked((prev) => prev.map((v, n) => (n === i ? !v : v)));

    return (
        <Panel>
            <PanelHead>
                <h2>Search</h2>
                <IconButton $h={23} aria-label="Text search"><Icon name="docSearch" /></IconButton>
                <IconButton $h={23} $on aria-label="Visual search"><Icon name="visSearch" /></IconButton>
            </PanelHead>
            <Source>
                <Preview>
                    <svg width="54" height="69" viewBox="0 0 54 69" fill="none" stroke="#222">
                        <rect width="54" height="69" fill="#fdfdfd" stroke="none" />
                        <path d="M2.500 2.500H49q3 0 3 3V64q0 3-3 3H2.500z" stroke="#777" />
                        <rect x="10.500" y="5.500" width="37" height="58" rx="4" />
                        <path d="M10.500 32.500H24M10.500 36.500H24" />
                        <circle cx="26.500" cy="34.500" r="2.500" />
                    </svg>
                </Preview>
                <PanelButton>Get Rectangle</PanelButton>
                <PanelButton>Refine Colors</PanelButton>
                <PanelButton>Search</PanelButton>
            </Source>
            <Combo $w={204} $m="0 7px" $plain>
                <select aria-label="Search in">
                    <option>Current Page (Floor Plan)</option>
                </select>
                <Icon name="down" size={14} />
            </Combo>
            <PathRow>
                <input aria-label="Folder" defaultValue="C:\Users\ArielR\Documents" />
                <PanelButton $h={18} $dim>...</PanelButton>
            </PathRow>
            <SectionTitle $m="6px 0 17px"><Icon name="down" size={14} />Options</SectionTitle>
            <SliderRow>
                Sensitivity:
                <Slider type="range" min="0" max="100" defaultValue="5" />
            </SliderRow>
            {options.map(([label, , dim], i) => (
                <CheckRow key={label} $dim={dim}>
                    <Check type="checkbox" disabled={dim} checked={checked[i]} onChange={() => toggle(i)} />
                    {label}
                </CheckRow>
            ))}
            <SectionTitle $m="3px 0 4px"><Icon name="down" size={14} />Results</SectionTitle>
            <ResultArea>
                <ResultList>
                    {results.map((d, i) => (
                        <ResultRow key={d} $on={i === 2}>
                            <Branch $on={i === 2} />
                            <Check type="checkbox" $s={9} />
                            <ResultName>(p.Floor Plan)</ResultName>
                            <ResultThumb viewBox="0 0 84 64">
                                <path d={`${d}M0 11.500h84M0 56.500h84M0 63.500l7-7M15 63.500l7-7M31 63.500l7-7M46 63.500l7-7M61 63.500l7-7M76 63.500l7-7`} strokeWidth="0.900" />
                                <rect x="22.500" y="16.500" width="39" height="29" rx="1" />
                                <rect x="24.500" y="18.500" width="35" height="22" rx="2" />
                                <circle cx="42" cy="31" r="1.500" />
                                <path d="M41.500 33v8M43 33v8" strokeWidth="0.800" />
                            </ResultThumb>
                        </ResultRow>
                    ))}
                </ResultList>
                <ScrollBar>
                    <Icon name="up" size={14} />
                    <Track $rows="86fr 64fr 0"><Thumb $c="#a9a9a9" /></Track>
                    <Icon name="down" size={14} />
                </ScrollBar>
            </ResultArea>
            <Found>5 Results found in 1 document(s)</Found>
            <Pointer viewBox="0 0 36 36">
                <circle cx="18" cy="18" r="17.500" fill="#d9d41e" fillOpacity="0.600" />
                <path d="M12.500 8.500v16l3.700-3.500 2.600 5.500 3-1.400-2.600-5.300h5z" fill="#fff" stroke="#555" strokeWidth="0.600" />
            </Pointer>
        </Panel>
    );
};

/* ---------- windows taskbar ---------- */

const Taskbar = styled.div`
    display: flex;
    height: 34px;
    background: linear-gradient(90deg, #48250f 0, #48250f 40px, #46302c 330px, #4b2d26 420px, #50280f 520px, #50260f 680px, #4b2c26 800px, #532a22 1000px, #5c281f 1280px);
    color: #f2ece9;
    font-family: "Open Sans", "Noto Sans", sans-serif;
`;

const StartButton = styled.button`
    display: flex;
    align-items: center;
    justify-content: center;
    width: 40px;
    padding: 0;
    border: 0;
    background: transparent;
`;

const TaskSearch = styled.label`
    display: flex;
    align-items: center;
    gap: 8px;
    width: 286px;
    padding-left: 9px;
    background: #f3f2f1;
    color: #333;

    input {
        width: 200px;
        padding: 0;
        border: 0;
        background: transparent;
        font-size: 12px;
    }

    input::placeholder {
        color: #444;
        opacity: 1;
    }
`;

const AppList = styled.div`
    display: flex;
    width: 455px;
`;

const TaskApp = styled.button`
    display: flex;
    flex: 1;
    align-items: center;
    justify-content: center;
    padding: 0;
    border: 0;
    border-bottom: ${(p) => (p.$on ? '2px solid #ffab82' : '0')};
    background: ${(p) => (p.$on ? '#8f3d19' : 'transparent')};
`;

const Tray = styled.div`
    display: flex;
    align-items: center;
    gap: 4px;
    margin-left: auto;
    padding-right: 2px;
`;

const Clock = styled.time`
    width: 56px;
    text-align: center;
    line-height: 15px;
`;

const ShowDesktop = styled.span`
    align-self: stretch;
    width: 1px;
    margin-left: 11px;
    background: #a0817b;
`;

const apps = {
    Cortana: <circle cx="10" cy="10" r="6" fill="none" stroke="#f4eeec" strokeWidth="2" />,
    'Task view': <path d="M4 4v2h9V4M4 16v-2h9v2M4 8h9v4H4zM16.500 4v12M15 9h3" fill="none" stroke="#e8e0de" />,
    'File Explorer': <><path d="M1 3h7l1 2h10v12H1z" fill="#e8a82c" /><path d="M1 7h18v10H1z" fill="#fbd65c" /><path d="M5 17v-6h10v6h-3v-3H8v3z" fill="#3b8fd0" /></>,
    Chrome: <><circle cx="10" cy="10" r="9" fill="#f7c92e" /><path d="M10 10L2.200 5.500A9 9 0 0 1 17.800 5.500z" fill="#df4634" /><path d="M10 10L2.200 5.500A9 9 0 0 0 9 19z" fill="#2da24e" /><circle cx="10" cy="10" r="4.500" fill="#fff" /><circle cx="10" cy="10" r="3.500" fill="#4687ea" /></>,
    Outlook: <><path d="M6 1h12v10H6z" fill="#28a1e2" /><path d="M12 1h6v5h-6zM6 6h6v5H6z" fill="#1069b8" /><path d="M5 10h14v8H5z" fill="#1884d8" /><path d="M0 5h11v10H0z" fill="#0f6cbf" /><circle cx="5.500" cy="10" r="2.300" fill="none" stroke="#fff" strokeWidth="1.400" /></>,
    Solitaire: <><path d="M2 7l7-2 1 9-7 1z" fill="#e9e6e2" /><path d="M7 5h6v9H7z" fill="#d2d0d4" /><path d="M12 5l6 2-1 8-5-1z" fill="#f5f2ee" /><path d="M4 8.500h2.500l-1.500 3.500h2.500M14.500 8.500l-1.500 3.500h3" fill="none" stroke="#777" /></>,
    Calculator: <><path d="M2 0h16v20H2z" fill="#8b98a2" /><path d="M4 2h12v4H4z" fill="#5fc6dd" /><path d="M4 8h3v3H4zM8.500 8h3v3h-3zM13 8h3v3h-3zM4 12h3v3H4zM8.500 12h3v3h-3zM4 16h3v2.500H4zM8.500 16h3v2.500h-3z" fill="#eef2f5" /><path d="M13 12h3v6.500h-3z" fill="#1f4f86" /></>,
    Notes: <><path d="M6 2l12 1-3 15L1 15z" fill="#dfeeee" /><path d="M7 4l10 1-3 11L3 14z" fill="#69b5b4" /><path d="M12 4l5 1-3 11-5-1z" fill="#b9dedb" /></>,
    Paint: <><path d="M10 4C2 4 0 11 3 15s8 3 7 0 1-3 4-3c6 0 4-8-4-8z" fill="#e9edf0" /><circle cx="6" cy="8" r="1.500" fill="#d94a3a" /><circle cx="11" cy="7" r="1.500" fill="#3c9b52" /><circle cx="5" cy="12" r="1.500" fill="#3b78cc" /><circle cx="15" cy="9" r="1.500" fill="#e2a72c" /><path d="M17 1l-5 16" stroke="#cf9a54" strokeWidth="2" /></>,
    Snip: <><ellipse cx="8.500" cy="6" rx="7.500" ry="4.500" fill="#f1e6e5" stroke="#d2605a" strokeWidth="1.500" transform="rotate(-15 8.500 6)" /><path d="M4 13l12-6M11 6l2 9" stroke="#d5d8da" strokeWidth="1.500" /><circle cx="12" cy="16.500" r="2" fill="none" stroke="#2d6fae" strokeWidth="1.500" /><circle cx="16.500" cy="13.500" r="2" fill="none" stroke="#2d6fae" strokeWidth="1.500" /></>,
    Revu: <><circle cx="10" cy="10" r="9.500" fill="#1497d1" /><path d="M5 5c3-2 9-2 9 1.500S10 11 7 11c3 0 4 5 7 5M8.500 6L5.500 16" fill="none" stroke="#fff" strokeWidth="2.200" strokeLinecap="round" strokeLinejoin="round" /></>,
};

const TrayIcon = ({ children }) => (
    <svg width="16" height="16" viewBox="0 0 16 16" fill="none" stroke="#f2ece9">{children}</svg>
);

const App = () => (
    <Page>
        <GlobalStyle />
        <MenuBar>
            {['Revu', 'File', 'Edit', 'View', 'Document', 'Batch', 'Tools', 'Window', 'Help'].map((m) => (
                <button key={m}>{m}</button>
            ))}
            <WindowButtons>
                {['M4 8h8', 'M4.500 6.500h5v5h-5zM6.500 6V4.500h5v5H10', 'M4.500 4.500l7 7M11.500 4.500l-7 7'].map((d) => (
                    <IconButton key={d} $w={16} $h={16} aria-label="Window">
                        <Svg viewBox="0 0 16 16"><path d={d} /></Svg>
                    </IconButton>
                ))}
            </WindowButtons>
        </MenuBar>
        <Toolbars>
            <ToolRow $gap={5}>
                <Groups groups={row1} lead />
                <Grip />
                <Combo $w={97} $m="4px 2px 0">
                    <select aria-label="Studio"><option>Bluebeam Studio</option></select>
                    <Icon name="down" size={14} />
                </Combo>
                <Tools items={['exitRoom', 'project', 'projectIn', ['docLock', { dim: 1 }]]} />
            </ToolRow>
            <ToolRow>
                <Groups groups={row2} lead />
            </ToolRow>
            <ToolRow>
                <Grip $lead />
                <Combo $w={66} $dim><select aria-label="Font"><option></option></select><Icon name="down" size={14} /></Combo>
                <Combo $w={66} $dim $m="4px 0 0"><select aria-label="Font size"><option>12</option></select><Icon name="down" size={14} /></Combo>
                <Tools items={textTools} />
                <Grip />
                <DoubleArrow viewBox="0 0 55 12">
                    <path d="M8 6h40" />
                    <path d="M6 6l6-3v6zM50 6l-6-3v6z" />
                </DoubleArrow>
                <Tools items={dimMenu(['startL', 'endR', 'lines'])} />
                <Groups groups={row3} />
            </ToolRow>
        </Toolbars>
        <DocBar>
            <DocButton $w={36} aria-label="Document pages"><Icon name="pageKey" /><Icon name="down" /></DocButton>
            <DocInfo><b>Name:</b> Example Floor Plan_AR&nbsp;&nbsp; <b>Pages:</b> 6</DocInfo>
            <DocButton $w={21} aria-label="Insert page"><Icon name="pageAdd" /></DocButton>
        </DocBar>
        <Main>
            <Rail $left>
                <Tools h={23} items={[['cabinet', { on: 1 }], 'thumbs', 'layers', 'toolbox', 'formEdit', 'sigs', 'tag3d', ['bullets', { on: 1 }]]} />
            </Rail>
            <Center>
                <TabStrip>
                    <DocTab>
                        Example Floor Plan_AR
                        <IconButton $w={16} $h={16} aria-label="Close"><Icon name="close" size={16} /></IconButton>
                    </DocTab>
                    <Icon name="down" />
                </TabStrip>
                <CanvasArea>
                    <FloorPlan />
                    <ScrollBar $edge>
                        <Icon name="up" size={14} />
                        <Track $rows="58fr 14px 387fr"><Thumb $c="#cdcdcd" /></Track>
                        <Icon name="down" size={14} />
                    </ScrollBar>
                </CanvasArea>
                <BottomBar>
                    <BarGroup>
                        <Tools items={[['single', { dim: 1 }], 'splitV', 'splitH', '|', 'fitPage', 'fitWidth']} />
                    </BarGroup>
                    <BarGroup $pad={18}>
                        <Tools items={[['hand', { on: 1 }], 'arrow', 'selText', 'zoom', ['first', { dim: 1 }], ['prev', { dim: 1 }]]} />
                        <PageBox>Floor Plan (1 of 6)</PageBox>
                        <Tools items={['next', 'last', '|', 'backView', ['fwdView', { dim: 1 }]]} />
                    </BarGroup>
                    <BarGroup $pad={8}>
                        <Tools items={[['sun', { menu: 10 }], ['penSlash', { on: 1 }]]} />
                        <Info $ml={8} $s={11}>1/8" = 1'-0"</Info>
                        <Info $ml={17} $s={11}>42.00 x 30.00 in</Info>
                    </BarGroup>
                </BottomBar>
            </Center>
            <SearchPanel />
            <Rail>
                <Tools h={23} items={['gear', 'ruler', 'bookmark', 'spaces', 'sets', 'label', 'mapPin', ['search', { on: 1 }]]} />
            </Rail>
        </Main>
        <StatusBar>
            <span>Ready</span>
            <BarGroup>
                <Tools h={23} items={['grid', 'snapGrid', ['snapDoc', { on: 1 }], 'snapMark', ['reuse', { on: 1 }], ['syncView', { on: 1, menu: 10 }]]} />
            </BarGroup>
            <Info $ml={20}>1/8" = 1'-0"</Info>
            <Info $ml={20}>42.00 x 30.00 in</Info>
            <Info $ml={36}>(24.07, 16.39)</Info>
        </StatusBar>
        <Taskbar>
            <StartButton aria-label="Start">
                <svg width="16" height="16" viewBox="0 0 16 16" fill="#fff">
                    <path d="M1 3l6-1v5.500H1zM8 1.800L15 1v6.500H8zM1 8.500h6V14l-6-1zM8 8.500h7V15l-7-1z" />
                </svg>
            </StartButton>
            <TaskSearch>
                <svg width="16" height="16" viewBox="0 0 16 16" fill="none" stroke="#333">
                    <circle cx="9.500" cy="6" r="4.500" /><path d="M6.500 9.500L1.500 14.500" />
                </svg>
                <input placeholder="Type here to search" aria-label="Type here to search" />
            </TaskSearch>
            <AppList>
                {Object.entries(apps).map(([name, art]) => (
                    <TaskApp key={name} $on={name === 'Revu'} aria-label={name}>
                        <svg width="20" height="20" viewBox="0 0 20 20">{art}</svg>
                    </TaskApp>
                ))}
            </AppList>
            <Tray>
                <TrayIcon><path d="M3 10l5-5 5 5" /></TrayIcon>
                <TrayIcon><rect x="6" y="1.500" width="4.500" height="9" fill="#f2ece9" /><path d="M4 9v3h8V9M8 12v3M5 14.500h6" /></TrayIcon>
                <TrayIcon><path d="M4 6h10v6H4z" fill="#f2ece9" /><path d="M2 4h3v4H2M15 8v2" /></TrayIcon>
                <TrayIcon><path d="M5 3.500h10v8H5M9 12v2M6 14.500h6M1.500 3.500h4v4h-4zM3.500 8v5" /></TrayIcon>
                <TrayIcon><path d="M2 6.500h2.500L8 3v10L4.500 9.500H2zM10 6q1.500 2 0 4M12 4.500q2.500 3.500 0 7" /></TrayIcon>
                <Clock>11:21 AM<br />10/15/2020</Clock>
                <svg width="20" height="20" viewBox="0 0 16 16" fill="none" stroke="#f2ece9"><path d="M2.500 3h11v8.500h-4L8 13.500l-1.500-2h-4z" /></svg>
                <ShowDesktop />
            </Tray>
        </Taskbar>
    </Page>
);

export default App;
